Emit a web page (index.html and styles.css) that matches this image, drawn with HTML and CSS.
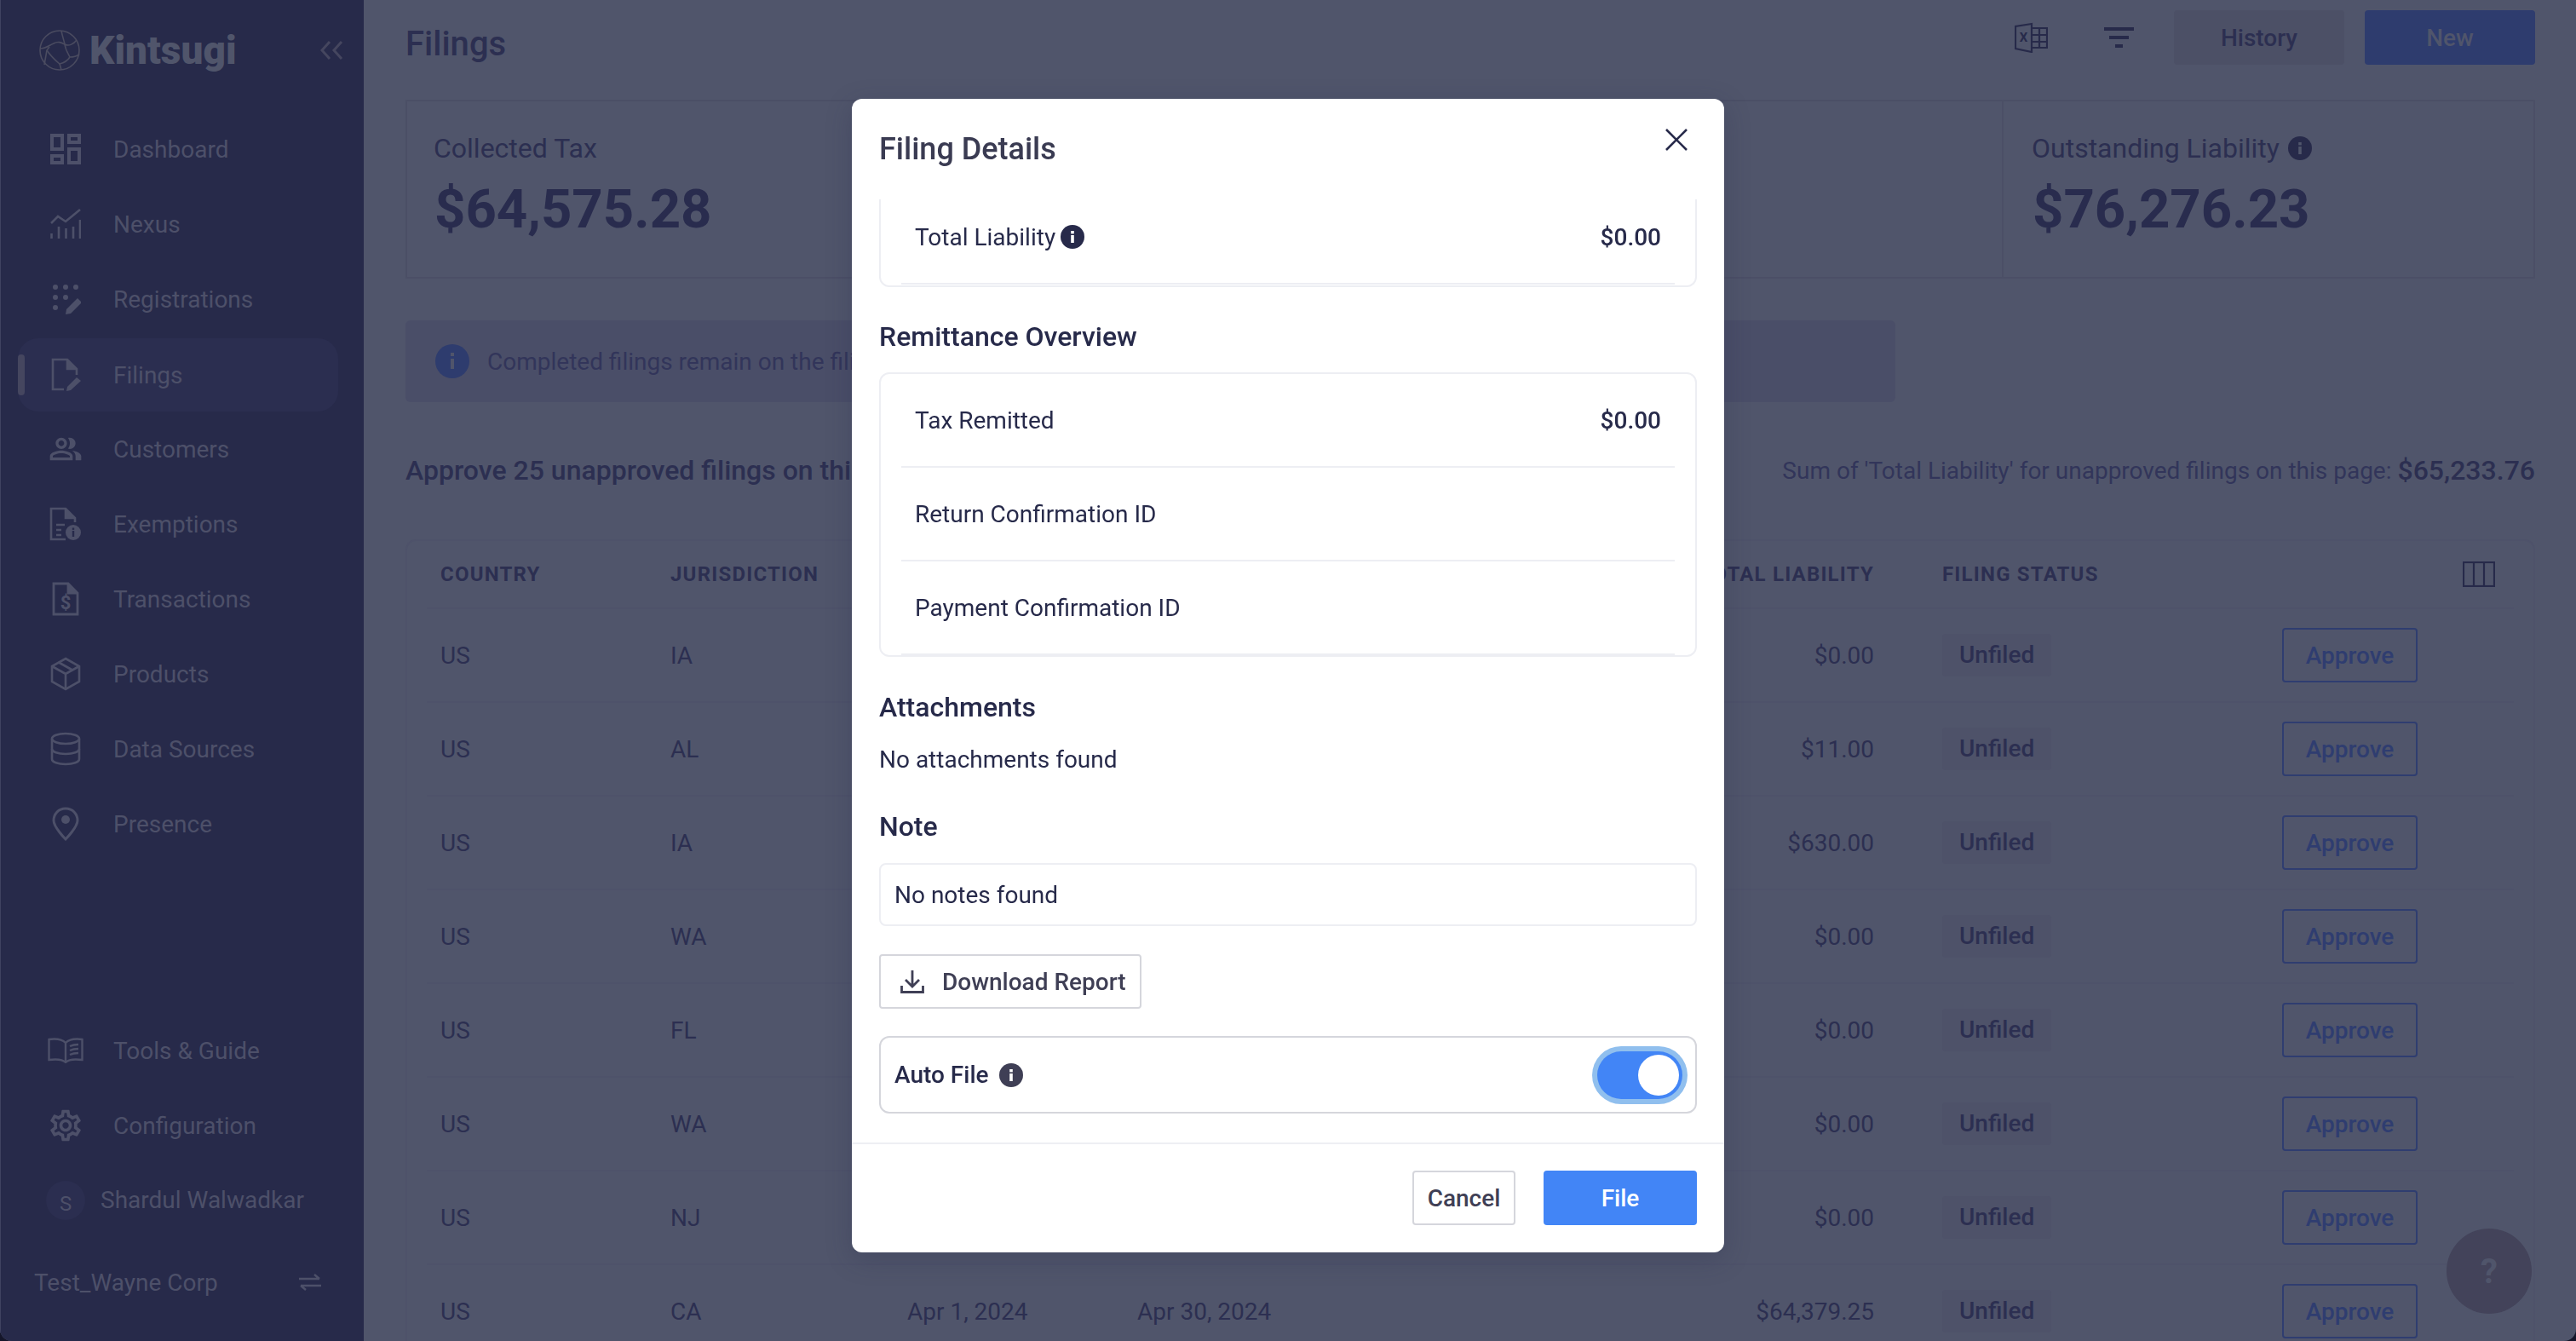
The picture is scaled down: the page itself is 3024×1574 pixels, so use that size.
FILE: index.html
```html
<!DOCTYPE html>
<html lang="en">
<head>
<meta charset="utf-8">
<title>Kintsugi - Filings</title>
<link rel="stylesheet" href="styles.css">
</head>
<body>
<div class="app">
  <aside class="sidebar">
    <div class="brand">
      <svg class="logo" viewBox="0 0 48 48" fill="none" stroke="#4a4b60" stroke-width="1.6">
        <circle cx="24" cy="24" r="23"/>
        <path d="M1 22 C8 22 12 18 17 16 C22 13 26 15 30 17 C35 20 41 16 44 12"/>
        <path d="M26 1 C27 7 29 12 30 17 C31 24 34 28 36 32 C40 32 44 31 47 29"/>
        <path d="M9 24 C13 30 18 35 24 40 C28 39 33 37 36 32"/>
        <path d="M24 40 L26 47"/>
        <path d="M12 20 L9 24 L6 41"/>
      </svg>
      <span class="brand-name">Kintsugi</span>
      <svg class="collapse" viewBox="0 0 27 22" fill="none" stroke="#45465f" stroke-width="3">
        <path d="M11 1 L2 11 L11 21"/><path d="M25 1 L16 11 L25 21"/>
      </svg>
    </div>
    <nav class="nav">
      <a class="nav-item"><span class="nav-icon"><svg class="ic-36" viewBox="3 3 18 18" fill="currentColor"><path d="M19 5v2h-4V5h4M9 5v6H5V5h4m10 8v6h-4v-6h4M9 17v2H5v-2h4M21 3h-8v6h8V3zM11 3H3v10h8V3zm10 8h-8v10h8V11zm-10 4H3v6h8v-6z"/></svg></span>Dashboard</a>
      <a class="nav-item"><span class="nav-icon"><svg class="ic-36" viewBox="0 0 36 36" fill="none" stroke="currentColor" stroke-width="2.6"><path d="M1 17 L9 9 L18 15 L35 1"/><path d="M1.5 29V35M10 21V35M18.5 23V35M27 21V35M35 13V35"/></svg></span>Nexus</a>
      <a class="nav-item"><span class="nav-icon"><svg class="ic-36" viewBox="0 0 36 36" fill="currentColor"><circle cx="6" cy="4" r="3"/><circle cx="18" cy="4" r="3"/><circle cx="30" cy="4" r="3"/><circle cx="6" cy="16" r="3"/><circle cx="18" cy="16" r="3"/><circle cx="6" cy="28" r="3"/><path d="M32 17 L37 22 L24 35 L18 36 L19 30 Z"/></svg></span>Registrations</a>
      <a class="nav-item nav-item-active"><span class="nav-icon"><svg class="ic-40" viewBox="0 0 40 40" fill="none" stroke="currentColor" stroke-width="2.6"><path d="M18 37H5V2H22L33 13V20"/><path d="M22 2V13H33" fill="currentColor"/><path d="M33 23 L38 27 L26 38 L21 39 L22 34 Z" fill="currentColor" stroke="none"/></svg></span>Filings</a>
      <a class="nav-item"><span class="nav-icon"><svg class="ic-40" viewBox="0 0 24 24" fill="currentColor"><path d="M16.67 13.13C18.04 14.06 19 15.32 19 17v3h4v-3c0-2.18-3.57-3.47-6.33-3.87zM15 12c2.21 0 4-1.79 4-4s-1.79-4-4-4c-.47 0-.91.1-1.33.24C14.5 5.27 15 6.58 15 8s-.5 2.73-1.33 3.76c.42.14.86.24 1.33.24zM9 12c2.21 0 4-1.79 4-4s-1.79-4-4-4-4 1.79-4 4 1.79 4 4 4zm0-6c1.1 0 2 .9 2 2s-.9 2-2 2-2-.9-2-2 .9-2 2-2zM9 13c-2.67 0-8 1.34-8 4v3h16v-3c0-2.66-5.33-4-8-4zm6 5H3v-.99C3.2 16.29 6.3 15 9 15s5.8 1.29 6 2v1z"/></svg></span>Customers</a>
      <a class="nav-item"><span class="nav-icon"><svg class="ic-40" viewBox="0 0 40 40" fill="none" stroke="currentColor" stroke-width="2.6"><path d="M20 38H3V2H20L31 13V18"/><path d="M20 2V13H31" fill="currentColor"/><path d="M9 21H19M9 27H15M9 33H15"/><circle cx="29" cy="30" r="9" fill="currentColor" stroke="none"/><rect x="27.800" y="28" width="2.400" height="7" fill="#272a4a" stroke="none"/><rect x="27.800" y="24.500" width="2.400" height="2.400" fill="#272a4a" stroke="none"/></svg></span>Exemptions</a>
      <a class="nav-item"><span class="nav-icon"><svg class="ic-40" viewBox="0 0 40 40" fill="none" stroke="currentColor" stroke-width="2.8"><path d="M6 2H23L34 13V38H6Z"/><path d="M23 2V13H34" fill="currentColor"/><text class="dollar" x="20" y="32" text-anchor="middle">$</text></svg></span>Transactions</a>
      <a class="nav-item"><span class="nav-icon"><svg class="ic-40" viewBox="0 0 40 40" fill="none" stroke="currentColor" stroke-width="2.6"><path d="M20 2 L36 11 V29 L20 38 L4 29 V11 Z"/><path d="M4 11 L20 20 L36 11M20 20V38M12 6.500 L28 15.500"/></svg></span>Products</a>
      <a class="nav-item"><span class="nav-icon"><svg class="ic-40" viewBox="0 0 40 40" fill="none" stroke="currentColor" stroke-width="2.6"><ellipse cx="20" cy="8" rx="16" ry="6"/><path d="M4 8V32C4 35.500 11 38 20 38S36 35.500 36 32V8"/><path d="M4 20C4 23.500 11 26 20 26S36 23.500 36 20"/></svg></span>Data Sources</a>
      <a class="nav-item"><span class="nav-icon"><svg class="ic-40" viewBox="0 0 40 40" fill="none" stroke="currentColor" stroke-width="3"><path d="M20 2C11.500 2 6 8.500 6 16C6 24 20 38 20 38S34 24 34 16C34 8.500 28.500 2 20 2Z"/><circle cx="20" cy="15" r="5" fill="currentColor" stroke="none"/></svg></span>Presence</a>
    </nav>
    <div class="nav nav-bottom">
      <a class="nav-item"><span class="nav-icon"><svg class="ic-42" viewBox="0 0 42 30" fill="none" stroke="currentColor" stroke-width="2.4"><path d="M21 6C17 2 9 1 1.500 2V26C9 25 17 25 21 29C25 25 33 25 40.500 26V2C33 1 25 2 21 6Z"/><path d="M21 6V29M26 10C29 8.500 32 8 36 8M26 15C29 13.500 32 13 36 13M26 20C29 18.500 32 18 36 18"/></svg></span>Tools &amp; Guide</a>
      <a class="nav-item"><span class="nav-icon"><svg class="ic-48" viewBox="0 0 24 24" fill="currentColor"><path d="M19.43 12.98c.04-.32.07-.64.07-.98 0-.34-.03-.66-.07-.98l2.11-1.65c.19-.15.24-.42.12-.64l-2-3.46c-.09-.16-.26-.25-.44-.25-.06 0-.12.01-.17.03l-2.49 1c-.52-.4-1.08-.73-1.69-.98l-.38-2.65C14.46 2.18 14.25 2 14 2h-4c-.25 0-.46.18-.49.42l-.38 2.65c-.61.25-1.17.59-1.69.98l-2.49-1c-.06-.02-.12-.03-.18-.03-.17 0-.34.09-.43.25l-2 3.46c-.13.22-.07.49.12.64l2.11 1.65c-.04.32-.07.65-.07.98 0 .33.03.66.07.98l-2.11 1.65c-.19.15-.24.42-.12.64l2 3.46c.09.16.26.25.44.25.06 0 .12-.01.17-.03l2.49-1c.52.4 1.08.73 1.69.98l.38 2.65c.03.24.24.42.49.42h4c.25 0 .46-.18.49-.42l.38-2.65c.61-.25 1.17-.59 1.69-.98l2.49 1c.06.02.12.03.18.03.17 0 .34-.09.43-.25l2-3.46c.12-.22.07-.49-.12-.64l-2.11-1.65zm-1.98-1.71c.04.31.05.52.05.73 0 .21-.02.43-.05.73l-.14 1.13.89.7 1.08.84-.7 1.21-1.27-.51-1.04-.42-.9.68c-.43.32-.84.56-1.25.73l-1.06.43-.16 1.13-.2 1.35h-1.4l-.19-1.35-.16-1.13-1.06-.43c-.43-.18-.83-.41-1.23-.71l-.91-.7-1.06.43-1.27.51-.7-1.21 1.08-.84.89-.7-.14-1.13c-.03-.31-.05-.54-.05-.74s.02-.43.05-.73l.14-1.13-.89-.7-1.08-.84.7-1.21 1.27.51 1.04.42.9-.68c.43-.32.84-.56 1.25-.73l1.06-.43.16-1.13.2-1.35h1.39l.19 1.35.16 1.13 1.06.43c.43.18.83.41 1.23.71l.91.7 1.06-.43 1.27-.51.7 1.21-1.07.85-.89.7.14 1.13zM12 8c-2.21 0-4 1.79-4 4s1.79 4 4 4 4-1.79 4-4-1.79-4-4-4zm0 6c-1.1 0-2-.9-2-2s.9-2 2-2 2 .9 2 2-.9 2-2 2z"/></svg></span>Configuration</a>
      <div class="nav-user"><span class="avatar">S</span><span class="user-name">Shardul Walwadkar</span></div>
      <div class="org">
        <span>Test_Wayne Corp</span>
        <svg class="org-switch" viewBox="0 0 26 20" fill="none" stroke="currentColor" stroke-width="2.4"><path d="M0 6H24M18 1L24 6"/><path d="M26 14H2M8 19L2 14"/></svg>
      </div>
    </div>
  </aside>

  <main class="main">
    <header class="topbar">
      <h1 class="page-title">Filings</h1>
      <div class="actions">
        <svg class="excel" viewBox="0 0 39 36" fill="none" stroke="#272a4a" stroke-width="2.200"><path d="M20 2 L1 5 V31 L20 35 Z"/><path d="M20 7H38V30H20M20 15H38M20 23H38M29 7V30"/><text class="excel-x" x="10.500" y="23" text-anchor="middle">X</text></svg>
        <svg class="filter" viewBox="0 0 35 24" fill="#272a4a"><rect x="0" y="0" width="35" height="4"/><rect x="6" y="10" width="23" height="4"/><rect x="13" y="20" width="9" height="4"/></svg>
        <button class="btn-history">History</button>
        <button class="btn-new">New</button>
      </div>
    </header>

    <section class="stats">
      <div class="stat">
        <div class="stat-label">Collected Tax</div>
        <div class="stat-value">$64,575.28</div>
      </div>
      <div class="stat"></div>
      <div class="stat"></div>
      <div class="stat">
        <div class="stat-label">Outstanding Liability <svg class="stat-info" viewBox="0 0 28 28"><circle cx="14" cy="14" r="14" fill="#272a4a"/><rect x="12.200" y="12" width="3.600" height="9" fill="#50556b"/><rect x="12.200" y="7" width="3.600" height="3.400" fill="#50556b"/></svg></div>
        <div class="stat-value">$76,276.23</div>
      </div>
    </section>

    <section class="banner">
      <svg class="banner-icon" viewBox="0 0 40 40"><circle cx="20" cy="20" r="20" fill="#2e3c6e"/><rect x="18" y="17" width="4" height="12" fill="#50556b"/><rect x="18" y="10" width="4" height="4" fill="#50556b"/></svg>
      <span>Completed filings remain on the filings page</span>
    </section>

    <section class="summary">
      <div class="summary-title">Approve 25 unapproved filings on this page</div>
      <div class="summary-sum">Sum of 'Total Liability' for unapproved filings on this page: <strong class="summary-value">$65,233.76</strong></div>
    </section>

    <section class="table">
      <div class="row row-head">
        <div>COUNTRY</div><div>JURISDICTION</div><div></div><div></div>
        <div class="cell-amount">TOTAL LIABILITY</div><div class="cell-status">FILING STATUS</div>
        <div class="cell-columns"><svg class="columns-icon" viewBox="0 0 38 30" fill="none" stroke="#272a4a" stroke-width="2.200"><rect x="1" y="1" width="36" height="28"/><path d="M13 1V29M25 1V29"/></svg></div>
      </div>
      <div class="row"><div>US</div><div>IA</div><div></div><div></div><div class="cell-amount">$0.00</div><div class="cell-status"><span class="badge">Unfiled</span></div><div><button class="btn-approve">Approve</button></div></div>
      <div class="row"><div>US</div><div>AL</div><div></div><div></div><div class="cell-amount">$11.00</div><div class="cell-status"><span class="badge">Unfiled</span></div><div><button class="btn-approve">Approve</button></div></div>
      <div class="row"><div>US</div><div>IA</div><div></div><div></div><div class="cell-amount">$630.00</div><div class="cell-status"><span class="badge">Unfiled</span></div><div><button class="btn-approve">Approve</button></div></div>
      <div class="row"><div>US</div><div>WA</div><div></div><div></div><div class="cell-amount">$0.00</div><div class="cell-status"><span class="badge">Unfiled</span></div><div><button class="btn-approve">Approve</button></div></div>
      <div class="row"><div>US</div><div>FL</div><div></div><div></div><div class="cell-amount">$0.00</div><div class="cell-status"><span class="badge">Unfiled</span></div><div><button class="btn-approve">Approve</button></div></div>
      <div class="row"><div>US</div><div>WA</div><div></div><div></div><div class="cell-amount">$0.00</div><div class="cell-status"><span class="badge">Unfiled</span></div><div><button class="btn-approve">Approve</button></div></div>
      <div class="row"><div>US</div><div>NJ</div><div></div><div></div><div class="cell-amount">$0.00</div><div class="cell-status"><span class="badge">Unfiled</span></div><div><button class="btn-approve">Approve</button></div></div>
      <div class="row"><div>US</div><div>CA</div><div>Apr 1, 2024</div><div>Apr 30, 2024</div><div class="cell-amount">$64,379.25</div><div class="cell-status"><span class="badge">Unfiled</span></div><div><button class="btn-approve">Approve</button></div></div>
    </section>
  </main>
</div>

<button class="help">?</button>

<div class="modal">
  <div class="modal-head">
    <h2 class="modal-title">Filing Details</h2>
    <svg class="modal-close" viewBox="0 0 26 26" fill="none" stroke="#272a4a" stroke-width="2.600"><path d="M1 1L25 25M25 1L1 25"/></svg>
  </div>
  <div class="modal-body">
    <div class="card card-cut">
      <div class="card-row card-row-cut">
        <span class="label">Total Liability <svg class="info" viewBox="0 0 28 28"><circle cx="14" cy="14" r="14" fill="#272a4a"/><rect x="12.200" y="12" width="3.600" height="9" fill="#fff"/><rect x="12.200" y="7" width="3.600" height="3.400" fill="#fff"/></svg></span>
        <span class="amount">$0.00</span>
      </div>
    </div>
    <h3 class="section-title">Remittance Overview</h3>
    <div class="card card-shift">
      <div class="card-row"><span>Tax Remitted</span><span class="amount">$0.00</span></div>
      <div class="card-row"><span>Return Confirmation ID</span></div>
      <div class="card-row"><span>Payment Confirmation ID</span></div>
    </div>
    <h3 class="section-title section-title-attach">Attachments</h3>
    <p class="plain">No attachments found</p>
    <h3 class="section-title">Note</h3>
    <div class="note">No notes found</div>
    <button class="btn-download">
      <svg class="download-icon" viewBox="0 0 28 28" fill="none" stroke="#3f3f55" stroke-width="2.800"><path d="M14 1V19M6 12L14 20L22 12"/><path d="M1.500 19V26.500H26.500V19"/></svg>
      Download Report
    </button>
    <div class="autofile">
      <span class="autofile-label">Auto File <svg class="info info-auto" viewBox="0 0 28 28"><circle cx="14" cy="14" r="14" fill="#3f3f55"/><rect x="12.200" y="12" width="3.600" height="9" fill="#fff"/><rect x="12.200" y="7" width="3.600" height="3.400" fill="#fff"/></svg></span>
      <span class="toggle"><span class="toggle-thumb"></span></span>
    </div>
  </div>
  <div class="modal-foot">
    <button class="btn-cancel">Cancel</button>
    <button class="btn-file">File</button>
  </div>
</div>
</body>
</html>
```

FILE: styles.css
```css
* { box-sizing: border-box; }
html, body { margin: 0; height: 100%; }
body {
  background: #15162a;
  font-family: Roboto, "Liberation Sans", sans-serif;
  font-size: 28px;
  color: #2c2f51;
  overflow: hidden;
}
button { font-family: inherit; cursor: pointer; }
h1, h2, h3, p { margin: 0; font-weight: 500; }

.app {
  display: flex;
  height: 1574px;
  width: 3024px;
  background: #50556b;
  border-radius: 0 0 14px 14px;
  overflow: hidden;
}

/* Sidebar */
.sidebar {
  width: 427px;
  flex: none;
  display: flex;
  flex-direction: column;
  background: #272a4a;
  color: #4d5069;
  border-left: 1px solid #3f4260;
  padding-bottom: 17px;
}
.brand {
  display: flex;
  align-items: center;
  height: 118px;
  margin-bottom: 13px;
  padding-left: 45px;
}
.logo { width: 48px; height: 48px; flex: none; }
.brand-name {
  margin-left: 11px;
  font-size: 46px;
  font-weight: 900;
  color: #50556b;
}
.collapse { width: 27px; height: 22px; margin-left: auto; margin-right: 24px; }
.nav { display: flex; flex-direction: column; }
.nav-bottom { margin-top: auto; }
.nav-item {
  display: flex;
  align-items: center;
  height: 88px;
  margin-left: 20px;
  width: 376px;
  padding-left: 36px;
}
.nav-item-active {
  position: relative;
  background: #2b2e50;
  border-radius: 24px;
  height: 86px;
  margin-top: 2px;
}
.nav-item-active::before {
  content: "";
  position: absolute;
  left: 0;
  top: 19px;
  width: 8px;
  height: 48px;
  border-radius: 4px;
  background: #45465f;
}
.nav-icon {
  width: 40px;
  height: 40px;
  flex: none;
  margin-right: 36px;
  display: flex;
  align-items: center;
  justify-content: center;
}
.ic-36 { width: 36px; height: 36px; flex: none; }
.ic-40 { width: 40px; height: 40px; flex: none; }
.ic-42 { width: 42px; height: 30px; flex: none; }
.ic-48 { width: 44px; height: 44px; flex: none; }
.dollar { font-size: 22px; font-weight: 700; fill: currentColor; stroke: none; font-family: Roboto, sans-serif; }
.nav-user {
  display: flex;
  align-items: center;
  height: 88px;
  margin-left: 53px;
}
.avatar {
  width: 46px;
  height: 46px;
  border-radius: 50%;
  flex: none;
  background: #2b2e50;
  display: flex;
  align-items: center;
  justify-content: center;
  font-size: 24px;
  padding-top: 8px;
}
.user-name { margin-left: 18px; margin-bottom: 1px; }
.org {
  display: flex;
  align-items: center;
  justify-content: space-between;
  height: 104px;
  padding: 0 50px 0 39px;
}
.org-switch { width: 26px; height: 20px; }

/* Main */
.main {
  flex: 1;
  min-width: 0;
  padding: 0 48px 0 49px;
  display: flex;
  flex-direction: column;
}
.topbar {
  display: flex;
  justify-content: space-between;
  align-items: flex-start;
  height: 117px;
  padding-top: 12px;
  flex: none;
}
.page-title { font-size: 40px; line-height: 80px; font-weight: 500; }
.actions { display: flex; align-items: center; height: 64px; }
.excel { width: 39px; height: 36px; margin-right: 66px; }
.excel-x { font-size: 15px; font-weight: 700; fill: #272a4a; stroke: none; font-family: Roboto, sans-serif; }
.filter { width: 35px; height: 24px; margin-right: 47px; }
.btn-history, .btn-new {
  width: 200px;
  height: 64px;
  border: 0;
  border-radius: 4px;
  font-size: 28px;
  font-weight: 500;
}
.btn-history { background: #4c5066; color: #2c2f51; margin-right: 24px; }
.btn-new { background: #2e3c6e; color: #50556b; }

.stats {
  display: grid;
  grid-template-columns: repeat(4, 1fr);
  height: 210px;
  flex: none;
  border: 2px solid #4b4f66;
}
.stat { padding: 35px 0 0 31px; }
.stat + .stat { border-left: 2px solid #4b4f66; }
.stat:last-child { padding-left: 33px; }
.stat-label {
  font-size: 32px;
  line-height: 40px;
  display: flex;
  align-items: center;
  gap: 10px;
}
.stat-value {
  margin-top: 16px;
  margin-left: 1px;
  font-size: 63.5px;
  line-height: 72px;
  font-weight: 700;
  color: #292c4e;
}
.stat-info { width: 28px; height: 28px; }

.banner {
  display: flex;
  align-items: center;
  gap: 21px;
  margin-top: 49px;
  width: 1749px;
  height: 96px;
  flex: none;
  padding-left: 35px;
  background: #4a4e68;
  border-radius: 6px;
  color: #32355a;
}
.banner-icon { width: 40px; height: 40px; flex: none; }

.summary {
  display: flex;
  justify-content: space-between;
  align-items: center;
  height: 40px;
  margin-top: 60px;
  flex: none;
}
.summary-title { font-size: 32px; font-weight: 500; }
.summary-sum { color: #32355a; display: flex; align-items: center; white-space: pre; }
.summary-value { font-size: 32px; font-weight: 500; color: #2c2f51; }

.table {
  margin-top: 61px;
  border: 2px solid #4e526a;
  border-bottom: 0;
  border-radius: 12px 12px 0 0;
  padding: 0 23px;
  flex: none;
}
.row {
  display: grid;
  grid-template-columns: 270px 278px 270px 270px 595px 479px 1fr;
  align-items: center;
  height: 110px;
  padding: 0 22px 0 16px;
  border-bottom: 2px solid #4e526a;
}
.row-head {
  height: 80px;
  font-size: 24px;
  font-weight: 700;
  letter-spacing: 1.2px;
}
.cell-amount { text-align: right; }
.cell-status { padding-left: 80px; }
.cell-columns { display: flex; justify-content: flex-end; }
.columns-icon { width: 38px; height: 30px; }
.badge {
  display: inline-block;
  height: 50px;
  line-height: 50px;
  padding: 0 20px;
  background: #4e5269;
  border-radius: 4px;
  font-weight: 500;
}
.btn-approve {
  display: block;
  width: 159px;
  height: 64px;
  padding: 0;
  background: transparent;
  border: 2px solid #2f3d70;
  border-radius: 4px;
  color: #2f3d70;
  font-size: 28px;
  font-weight: 500;
}

.help {
  position: fixed;
  left: 2872px;
  top: 1442px;
  width: 100px;
  height: 100px;
  border: 0;
  border-radius: 50%;
  background: #43435a;
  color: #50556b;
  font-size: 40px;
  font-weight: 700;
}

/* Modal */
.modal {
  position: fixed;
  left: 1000px;
  top: 116px;
  width: 1024px;
  height: 1354px;
  display: flex;
  flex-direction: column;
  background: #fff;
  border-radius: 12px;
  box-shadow: 0 8px 30px rgba(39, 42, 74, .28);
  color: #272a4a;
}
.modal-head {
  position: relative;
  height: 118px;
  flex: none;
  padding: 36px 32px 0;
}
.modal-title { font-size: 36px; line-height: 46px; font-weight: 500; color: #3a3b52; }
.modal-close {
  position: absolute;
  right: 43px;
  top: 35px;
  width: 26px;
  height: 26px;
}
.modal-body {
  flex: 1;
  min-height: 0;
  padding: 0 32px;
  overflow: hidden;
}
.card {
  border: 2px solid #edeef3;
  border-radius: 12px;
}
.card-cut {
  height: 103px;
  border-top: 0;
  border-radius: 0 0 12px 12px;
  overflow: hidden;
}
.card-shift { margin-top: -1px; }
.card-row {
  display: flex;
  align-items: center;
  justify-content: space-between;
  height: 110px;
  margin: 0 24px;
  padding: 0 16px;
  border-bottom: 2px solid #edeef3;
}
.card-row-cut { margin-top: -10px; }
.amount { font-weight: 500; }
.label { display: flex; align-items: center; gap: 6px; }
.info { width: 28px; height: 28px; flex: none; }
.section-title {
  font-size: 32px;
  line-height: 40px;
  font-weight: 500;
  margin-top: 38px;
  margin-bottom: 23px;
}
.section-title-attach { margin-top: 39px; }
.plain { font-weight: 400; line-height: 40px; margin-top: -1px; }
.note {
  display: flex;
  align-items: center;
  height: 74px;
  padding-left: 16px;
  border: 2px solid #edeef3;
  border-radius: 8px;
}
.btn-download {
  display: flex;
  align-items: center;
  gap: 21px;
  width: 308px;
  height: 64px;
  margin-top: 33px;
  padding: 0 0 0 23px;
  background: #fff;
  border: 2px solid #d5d6dc;
  border-radius: 4px;
  color: #3f3f55;
  font-size: 28px;
  font-weight: 500;
}
.download-icon { width: 28px; height: 28px; flex: none; }
.autofile {
  display: flex;
  align-items: center;
  justify-content: space-between;
  height: 91px;
  margin-top: 32px;
  padding: 0 15px 0 16px;
  border: 2px solid #d5d6dc;
  border-radius: 12px;
}
.autofile-label { display: flex; align-items: center; font-weight: 500; }
.info-auto { margin-left: 12px; }
.toggle {
  display: flex;
  justify-content: flex-end;
  align-items: center;
  width: 100px;
  height: 56px;
  padding: 4px;
  background: #4285f6;
  border-radius: 28px;
  box-shadow: 0 0 0 6px #90bfee;
}
.toggle-thumb { width: 48px; height: 48px; border-radius: 50%; background: #fff; }
.modal-foot {
  display: flex;
  justify-content: flex-end;
  gap: 33px;
  height: 129px;
  flex: none;
  padding: 31px 32px 0 0;
  border-top: 2px solid #eeeff3;
}
.btn-cancel, .btn-file {
  height: 64px;
  border-radius: 4px;
  font-size: 28px;
  font-weight: 500;
}
.btn-cancel { width: 121px; background: #fff; border: 2px solid #d5d6dc; color: #3f3f55; padding: 0; }
.btn-file { width: 180px; background: #4285f6; border: 0; color: #fff; }
```
